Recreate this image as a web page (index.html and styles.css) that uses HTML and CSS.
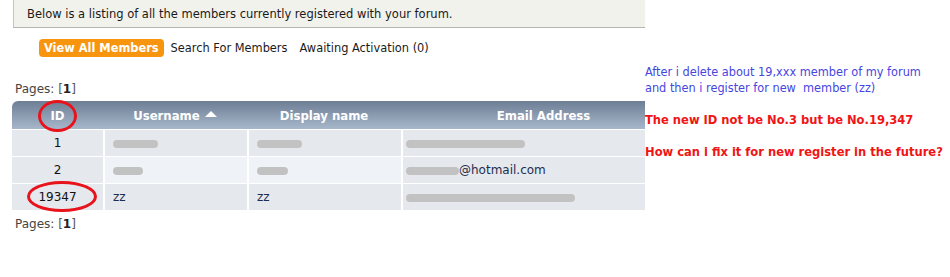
FILE: index.html
```html
<!DOCTYPE html>
<html lang="en">
<head>
    <meta charset="UTF-8">
    <title>Members List</title>
    <link rel="stylesheet" href="styles.css">
</head>
<body>
    <div class="page">
        <div class="main">
            <div class="top-row">
                <div class="notice">Below is a listing of all the members currently registered with your forum.</div>
                <div class="notice-fill"></div>
            </div>

            <div class="tabs">
                <span class="tab active">View All Members</span>
                <span class="tab">Search For Members</span>
                <span class="tab">Awaiting Activation (0)</span>
            </div>

            <div class="pages">Pages: <span class="bracket">[</span><b>1</b><span class="bracket">]</span></div>

            <table class="members">
                <thead>
                    <tr>
                        <th class="col-id"><span class="ring ring-head">ID</span></th>
                        <th class="col-user">Username <span class="sort-up"></span></th>
                        <th class="col-display">Display name</th>
                        <th class="col-email">Email Address</th>
                    </tr>
                </thead>
                <tbody>
                    <tr>
                        <td class="col-id">1</td>
                        <td><span class="blur" style="width: 45px"></span></td>
                        <td><span class="blur" style="width: 45px"></span></td>
                        <td class="col-email"><span class="blur" style="width: 119px"></span></td>
                    </tr>
                    <tr class="alt">
                        <td class="col-id">2</td>
                        <td><span class="blur" style="width: 30px"></span></td>
                        <td><span class="blur" style="width: 31px"></span></td>
                        <td class="col-email"><span class="blur" style="width: 53px"></span>@hotmail.com</td>
                    </tr>
                    <tr>
                        <td class="col-id"><span class="ring ring-row">19347</span></td>
                        <td>zz</td>
                        <td>zz</td>
                        <td class="col-email"><span class="blur" style="width: 169px"></span></td>
                    </tr>
                </tbody>
            </table>

            <div class="pages pages-bottom">Pages: <span class="bracket">[</span><b>1</b><span class="bracket">]</span></div>
        </div>

        <div class="notes">
            <p class="note-blue">After i delete about 19,xxx member of my forum<br>and then i register for new&nbsp; member (zz)</p>
            <p class="note-red">The new ID not be No.3 but be No.19,347</p>
            <p class="note-red">How can i fix it for new register in the future?</p>
        </div>
    </div>
</body>
</html>
```

FILE: styles.css
```css
body {
    margin: 0;
    background: #fff;
    font-family: "DejaVu Sans", sans-serif;
    font-size: 11.5px;
    color: #222;
}
.page {
    display: flex;
    align-items: flex-start;
}
.main {
    width: 633px;
    margin-left: 12px;
    overflow: hidden;
}
.top-row {
    display: flex;
    align-items: flex-start;
}
.notice {
    flex-shrink: 0;
    width: 632px;
    height: 28px;
    margin-left: 1px;
    padding-left: 13px;
    box-sizing: border-box;
    background: #f2f2ec;
    border-left: 1px solid #c4c4c4;
    border-bottom: 1px solid #b4b4b4;
    line-height: 28px;
    color: #1a1a1a;
}
.notice-fill {
    flex-shrink: 0;
    width: 41px;
    height: 14px;
    background: #f2f2ec;
}
.tabs {
    display: flex;
    gap: 2px;
    margin: 11px 0 0 27px;
}
.tab {
    padding: 0 5px;
    line-height: 18px;
    font-size: 11.4px;
    color: #1a1a1a;
}
.tab.active {
    background: #f7950f;
    color: #fff;
    font-weight: bold;
    border-radius: 4px;
}
.pages {
    margin: 25px 0 0 3px;
    color: #444;
    font-size: 12px;
    line-height: 14px;
}
.pages b {
    color: #222;
}
.bracket {
    color: #555;
}
.pages-bottom {
    margin-top: 7px;
}
.members {
    margin-top: 5px;
    width: 674px;
    border-collapse: separate;
    border-spacing: 0;
    table-layout: fixed;
    font-size: 12px;
}
.members th {
    height: 28px;
    padding: 0;
    background: linear-gradient(#6d7e95, #a7b7cb);
    color: #fff;
    font-family: "DejaVu Sans Condensed", "DejaVu Sans", sans-serif;
    font-size: 13px;
    font-weight: bold;
    text-align: center;
}
.members th.col-id {
    width: 91px;
    border-top-left-radius: 6px;
}
.members th.col-user {
    width: 144px;
}
.members th.col-display {
    width: 154px;
}
.members td {
    height: 26px;
    padding: 0 0 0 8px;
    background: #e5e8ed;
    color: #1f2d4d;
    border-left: 2px solid #fff;
    border-top: 1px solid #fff;
}
.members td.col-id {
    border-left: none;
    padding: 0;
    text-align: center;
    color: #111;
}
.members td.col-email {
    padding-left: 3px;
}
.members tr.alt td {
    background: #eff2f6;
}
.members tr.alt td.col-id,
.members tr.alt td.col-email {
    background: #e5e8ed;
}
.sort-up {
    display: inline-block;
    width: 0;
    height: 0;
    border-left: 6px solid transparent;
    border-right: 6px solid transparent;
    border-bottom: 6px solid #fff;
    vertical-align: 3px;
    margin-left: 1px;
}
.blur {
    display: inline-block;
    height: 8px;
    background: #c2c2c2;
    border-radius: 4px;
    vertical-align: middle;
}
.ring {
    position: relative;
    display: inline-block;
    line-height: 14px;
}
.ring::after {
    content: "";
    position: absolute;
    border: 3px solid #e8141c;
    border-radius: 50%;
}
.ring-head::after {
    left: -12px;
    right: -12px;
    top: -9px;
    bottom: -9px;
}
.ring-row::after {
    left: -11px;
    right: -20px;
    top: -9px;
    bottom: -8px;
}
.notes {
    padding-top: 64px;
    font-family: "DejaVu Sans Condensed", "DejaVu Sans", sans-serif;
}
.notes p {
    margin: 0;
    line-height: 16px;
}
.note-blue {
    color: #4646df;
    font-size: 12.6px;
}
.note-red {
    color: #f01414;
    font-size: 12.8px;
    font-weight: bold;
    margin-top: 16px !important;
}
```
